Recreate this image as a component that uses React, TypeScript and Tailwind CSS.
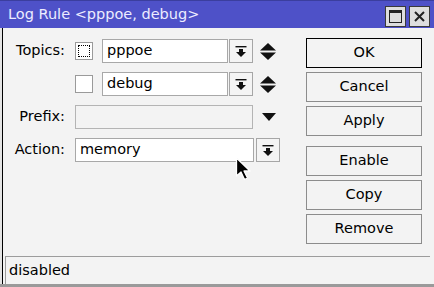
import React from "react";

function DropIcon() {
  return (
    <svg width="12" height="13" viewBox="0 0 12 13">
      <rect x="0.5" y="1" width="11" height="1.4" fill="#111" />
      <rect x="4" y="4" width="4" height="3" fill="#111" />
      <path d="M1 7 L11 7 L6 12 Z" fill="#111" />
    </svg>
  );
}

function UpDown() {
  return (
    <svg width="16" height="17" viewBox="0 0 16 17">
      <path d="M0 7.5 L16 7.5 L8 0 Z" fill="#111" />
      <path d="M0 9.5 L16 9.5 L8 17 Z" fill="#111" />
    </svg>
  );
}

function DropButton() {
  return (
    <div className="flex h-[24px] w-[24px] items-center justify-center border border-[#a6a6a6] bg-[#f4f4f4]">
      <DropIcon />
    </div>
  );
}

function Checkbox({ focused }: { focused?: boolean }) {
  return (
    <div className="flex h-[18px] w-[18px] items-center justify-center border border-[#9a9a9a] bg-white">
      {focused && <div className="h-[12px] w-[12px] border border-dotted border-black" />}
    </div>
  );
}

function Field({ value, width }: { value: string; width: string }) {
  return (
    <div className={`flex h-[24px] items-center border border-[#a8a8a8] bg-white px-[4px] ${width}`}>
      {value}
    </div>
  );
}

const actions = ["OK", "Cancel", "Apply"];
const extras = ["Enable", "Copy", "Remove"];

export default function App() {
  return (
    <div className="relative flex h-[287px] w-[434px] flex-col overflow-hidden bg-[#e4e4e4] font-['DejaVu_Sans'] text-[14.5px] text-black">
      {/* title bar */}
      <div className="flex h-[28px] items-center justify-between border-t border-[#3b3e9e] bg-[#4e51c8] pl-[8px] pr-[4px]">
        <span className="text-[14.5px] text-[#ececff]">Log Rule &lt;pppoe, debug&gt;</span>
        <div className="flex gap-[3px] pt-[3px]">
          <div className="flex h-[21px] w-[21px] items-center justify-center border border-[#3a3a3a] bg-[#dedede]">
            <svg width="13" height="13" viewBox="0 0 13 13">
              <rect x="0.5" y="0.5" width="12" height="12" fill="none" stroke="#222" />
              <rect x="0" y="0" width="13" height="3" fill="#222" />
            </svg>
          </div>
          <div className="flex h-[21px] w-[21px] items-center justify-center border border-[#3a3a3a] bg-[#dedede]">
            <svg width="11" height="11" viewBox="0 0 11 11">
              <path d="M1 1 L10 10 M10 1 L1 10" stroke="#222" strokeWidth="2" />
            </svg>
          </div>
        </div>
      </div>

      {/* body */}
      <div className="ml-[2px] flex flex-1 flex-col border-l border-black bg-[#f3f3f3]">
        <div className="flex pt-[10px]">
          {/* form */}
          <div className="flex w-[303px] flex-col gap-[9px] pt-[1px]">
            <div className="flex h-[24px] items-center">
              <span className="w-[62px] text-right">Topics:</span>
              <div className="ml-[10px]"><Checkbox focused /></div>
              <div className="ml-[9px]"><Field value="pppoe" width="w-[126px]" /></div>
              <div className="ml-[1px]"><DropButton /></div>
              <div className="ml-[7px]"><UpDown /></div>
            </div>
            <div className="flex h-[24px] items-center">
              <span className="w-[62px] text-right" />
              <div className="ml-[10px]"><Checkbox /></div>
              <div className="ml-[9px]"><Field value="debug" width="w-[126px]" /></div>
              <div className="ml-[1px]"><DropButton /></div>
              <div className="ml-[7px]"><UpDown /></div>
            </div>
            <div className="flex h-[24px] items-center">
              <span className="w-[62px] text-right">Prefix:</span>
              <div className="ml-[10px] h-[24px] w-[178px] border border-[#b4b4b4] bg-[#f3f3f3]" />
              <svg className="ml-[9px]" width="14" height="8" viewBox="0 0 14 8">
                <path d="M0 0 L14 0 L7 8 Z" fill="#111" />
              </svg>
            </div>
            <div className="flex h-[24px] items-center">
              <span className="w-[62px] text-right">Action:</span>
              <div className="ml-[10px]"><Field value="memory" width="w-[179px]" /></div>
              <div className="ml-[2px]"><DropButton /></div>
            </div>
          </div>

          {/* buttons */}
          <div className="flex w-[116px] flex-col">
            <div className="flex flex-col gap-[4px]">
              {actions.map((a, i) => (
                <div
                  key={a}
                  className={`flex h-[30px] items-center justify-center bg-[#f3f3f3] ${
                    i === 0 ? "border border-black" : "border border-[#8c8c8c]"
                  }`}
                >
                  {a}
                </div>
              ))}
            </div>
            <div className="mt-[10px] flex flex-col gap-[4px]">
              {extras.map((a) => (
                <div key={a} className="flex h-[30px] items-center justify-center border border-[#8c8c8c] bg-[#f3f3f3]">
                  {a}
                </div>
              ))}
            </div>
          </div>
        </div>

        {/* status bar */}
        <div className="mt-auto ml-[2px] mr-[4px] flex h-[28px] items-center border-t border-l border-[#9c9c9c] bg-[#f3f3f3] px-[3px]">
          disabled
        </div>
      </div>
      <div className="h-[3px] bg-[#9a9a9a]" />

      {/* mouse pointer */}
      <svg className="absolute left-[235px] top-[157px]" width="18" height="25" viewBox="0 0 18 25">
        <path
          d="M1.5 1 L1.5 19 L6 15 L9.5 22.5 L12.5 21 L9 14 L15 14 Z"
          fill="#000"
          stroke="#fff"
          strokeWidth="1.3"
          strokeLinejoin="round"
        />
      </svg>
    </div>
  );
}
